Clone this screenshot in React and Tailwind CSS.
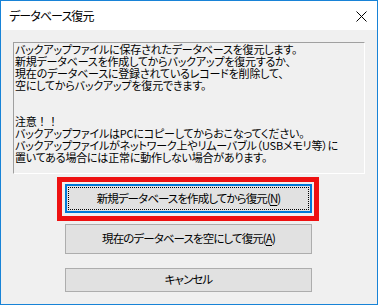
import React from "react";

const font = { fontFamily: '"Noto Sans CJK JP", "Noto Sans", sans-serif' };

const lines = [
  "バックアップファイルに保存されたデータベースを復元します。",
  "新規データベースを作成してからバックアップを復元するか、",
  "現在のデータベースに登録されているレコードを削除して、",
  "空にしてからバックアップを復元できます。",
  "",
  "",
  "注意！！",
  "バックアップファイルはPCにコピーしてからおこなってください。",
  "バックアップファイルがネットワーク上やリムーバブル（USBメモリ等）に",
  "置いてある場合には正常に動作しない場合があります。",
];

function Btn({ children, className }) {
  return (
    <button
      className={
        "flex items-center justify-center w-[247px] bg-[#e1e1e1] border border-[#adadad] text-[11.5px] tracking-[-0.9px] text-black " +
        className
      }
    >
      {children}
    </button>
  );
}

export default function App() {
  return (
    <div
      style={font}
      className="w-[378px] h-[305px] border border-[#1883d7] bg-[#f0f0f0] flex flex-col [font-feature-settings:'palt'] text-black"
    >
      <div className="h-[29px] bg-white flex items-center justify-between pl-[8px] pr-[10px]">
        <span className="text-[12px] tracking-[-0.9px]">データベース復元</span>
        <svg width="11" height="11" viewBox="0 0 11 11" className="mt-[1px]">
          <path d="M0.5 0.5L10.5 10.5M10.5 0.5L0.5 10.5" stroke="#000" strokeWidth="1" />
        </svg>
      </div>

      <div className="flex flex-col">
        <div className="ml-[12px] mt-[12px] w-[352px] h-[132px] border-t border-l border-t-[#a0a0a0] border-l-[#a0a0a0] border-b border-r border-b-white border-r-white pl-[1px] text-[11px] leading-[12px] tracking-[-0.2px] whitespace-pre">
          {lines.map((l, i) => (
            <div
              key={i}
              className={"h-[12px] " + (l === "注意！！" ? "[font-feature-settings:normal]" : "")}
            >
              {l}
            </div>
          ))}
        </div>

        <div className="ml-[56px] mt-[3px] w-[262px] h-[44px] border-[5px] border-[#ee1111] pl-[3px] pt-[2px]">
          <div className="w-[247px] h-[29px] border-2 border-[#0078d7] bg-[#e1e1e1] p-[1px]">
            <div className="w-full h-full border border-dotted border-black flex items-center justify-center text-[11.5px] tracking-[-0.9px]">
              新規データベースを作成してから復元(<span className="underline underline-offset-2">N</span>)
            </div>
          </div>
        </div>

        <Btn className="ml-[64px] mt-[3px] h-[30px]">
          現在のデータベースを空にして復元(<span className="underline underline-offset-2">A</span>)
        </Btn>
        <Btn className="ml-[64px] mt-[14px] h-[24px]">キャンセル</Btn>
      </div>
    </div>
  );
}
